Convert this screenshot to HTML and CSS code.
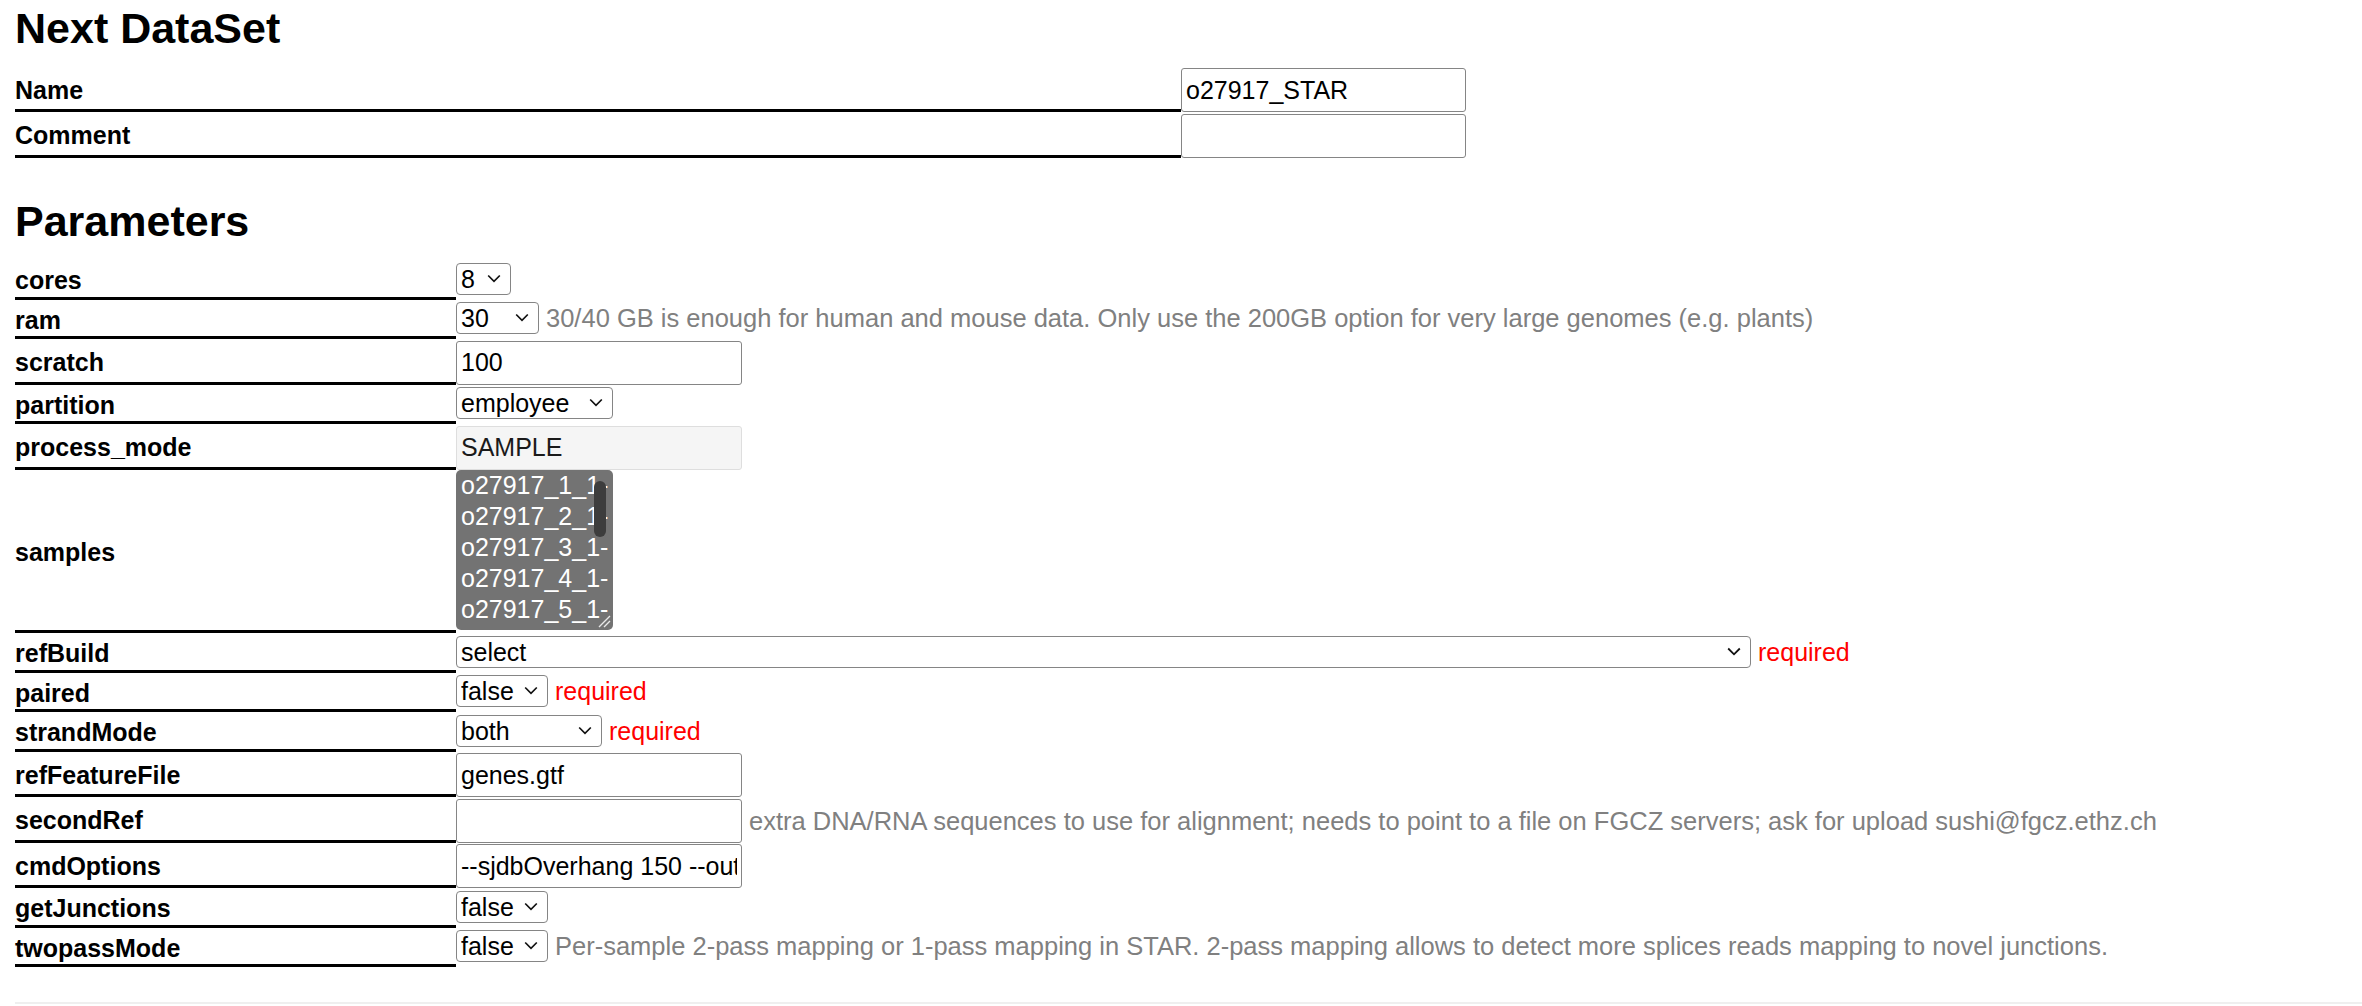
FILE: index.html
```html
<!DOCTYPE html>
<html lang="en">
<head>
<meta charset="utf-8">
<title>Next DataSet</title>
<link rel="stylesheet" href="styles.css">
</head>
<body>
<div class="page">
  <h2 class="title">Next DataSet</h2>
  <div class="grid grid-top">
    <div class="lab">Name</div>
    <div class="val v-inp"><input class="text w-name" type="text" value="o27917_STAR"></div>
    <div class="lab">Comment</div>
    <div class="val v-inp"><input class="text w-name" type="text" value=""></div>
  </div>

  <h2 class="title title-params">Parameters</h2>
  <div class="grid grid-params">
    <div class="lab">cores</div>
    <div class="val v-sel">
      <span class="sel w-cores"><select><option>8</option></select><svg class="chev" width="14" height="9" viewBox="0 0 14 9"><path d="M1.2 1.5 L7 7.3 L12.8 1.5" fill="none" stroke="#111" stroke-width="1.7"/></svg></span>
    </div>

    <div class="lab">ram</div>
    <div class="val v-sel">
      <span class="sel w-ram"><select><option>30</option></select><svg class="chev" width="14" height="9" viewBox="0 0 14 9"><path d="M1.2 1.5 L7 7.3 L12.8 1.5" fill="none" stroke="#111" stroke-width="1.7"/></svg></span>
      <span class="note note-sel">30/40 GB is enough for human and mouse data. Only use the 200GB option for very large genomes (e.g. plants)</span>
    </div>

    <div class="lab">scratch</div>
    <div class="val v-inp"><input class="text w-inp" type="text" value="100"></div>

    <div class="lab">partition</div>
    <div class="val v-sel">
      <span class="sel w-partition"><select><option>employee</option></select><svg class="chev" width="14" height="9" viewBox="0 0 14 9"><path d="M1.2 1.5 L7 7.3 L12.8 1.5" fill="none" stroke="#111" stroke-width="1.7"/></svg></span>
    </div>

    <div class="lab">process_mode</div>
    <div class="val v-inp"><input class="text w-inp ro" type="text" value="SAMPLE" readonly></div>

    <div class="lab">samples</div>
    <div class="val v-list">
      <div class="listbox">
        <div class="opt">o27917_1_1-</div>
        <div class="opt">o27917_2_1-</div>
        <div class="opt">o27917_3_1-</div>
        <div class="opt">o27917_4_1-</div>
        <div class="opt">o27917_5_1-</div>
        <div class="thumb"></div>
        <svg class="grip" width="14" height="14" viewBox="0 0 14 14"><path d="M2 13 L13 2 M7 13 L13 7" stroke="#e8e8e8" stroke-width="1.4" fill="none"/></svg>
      </div>
    </div>

    <div class="lab">refBuild</div>
    <div class="val v-sel">
      <span class="sel w-ref"><select><option>select</option></select><svg class="chev" width="14" height="9" viewBox="0 0 14 9"><path d="M1.2 1.5 L7 7.3 L12.8 1.5" fill="none" stroke="#111" stroke-width="1.8"/></svg></span>
      <span class="note note-sel req">required</span>
    </div>

    <div class="lab">paired</div>
    <div class="val v-sel">
      <span class="sel w-bool"><select><option>false</option></select><svg class="chev" width="14" height="9" viewBox="0 0 14 9"><path d="M1.2 1.5 L7 7.3 L12.8 1.5" fill="none" stroke="#111" stroke-width="1.7"/></svg></span>
      <span class="note note-sel req">required</span>
    </div>

    <div class="lab">strandMode</div>
    <div class="val v-sel">
      <span class="sel w-strand"><select><option>both</option></select><svg class="chev" width="14" height="9" viewBox="0 0 14 9"><path d="M1.2 1.5 L7 7.3 L12.8 1.5" fill="none" stroke="#111" stroke-width="1.7"/></svg></span>
      <span class="note note-sel req">required</span>
    </div>

    <div class="lab">refFeatureFile</div>
    <div class="val v-inp"><input class="text w-inp" type="text" value="genes.gtf"></div>

    <div class="lab">secondRef</div>
    <div class="val v-inp">
      <input class="text w-inp" type="text" value="">
      <span class="note note-inp">extra DNA/RNA sequences to use for alignment; needs to point to a file on FGCZ servers; ask for upload sushi@fgcz.ethz.ch</span>
    </div>

    <div class="lab">cmdOptions</div>
    <div class="val v-inp"><input class="text w-inp" type="text" value="--sjdbOverhang 150 --outFilterType BySJout --outSAMattributes All"></div>

    <div class="lab">getJunctions</div>
    <div class="val v-sel">
      <span class="sel w-bool"><select><option>false</option></select><svg class="chev" width="14" height="9" viewBox="0 0 14 9"><path d="M1.2 1.5 L7 7.3 L12.8 1.5" fill="none" stroke="#111" stroke-width="1.7"/></svg></span>
    </div>

    <div class="lab">twopassMode</div>
    <div class="val v-sel">
      <span class="sel w-bool"><select><option>false</option></select><svg class="chev" width="14" height="9" viewBox="0 0 14 9"><path d="M1.2 1.5 L7 7.3 L12.8 1.5" fill="none" stroke="#111" stroke-width="1.7"/></svg></span>
      <span class="note note-sel">Per-sample 2-pass mapping or 1-pass mapping in STAR. 2-pass mapping allows to detect more splices reads mapping to novel junctions.</span>
    </div>
  </div>
  <div class="footer-line"></div>
</div>
</body>
</html>
```

FILE: styles.css
```css
html, body {
  margin: 0;
  padding: 0;
  background: #fff;
}

body {
  font-family: "Liberation Sans", Arial, Helvetica, sans-serif;
  font-size: 25px;
  color: #000;
}

.page {
  padding: 4px 0 0 15px;
}

.title {
  margin: 0 0 16px 0;
  font-size: 43px;
  line-height: 48px;
  font-weight: bold;
}

.title-params {
  margin-top: 39px;
  margin-bottom: 17px;
}

.grid {
  display: grid;
  row-gap: 1.5px;
}

.grid-top {
  grid-template-columns: 1166px auto;
}

.grid-params {
  grid-template-columns: 441px auto;
}

.lab {
  display: flex;
  align-items: center;
  box-sizing: border-box;
  border-bottom: 3px solid #000;
  font-weight: bold;
  font-size: 25px;
  padding-top: 3px;
}

.val {
  display: flex;
  align-items: flex-start;
  white-space: nowrap;
}

.v-sel {
  height: 38px;
  box-sizing: border-box;
  padding-top: 1px;
}

.v-inp {
  height: 44px;
}

.v-list {
  height: 162px;
  box-sizing: border-box;
}

/* text inputs */
.text {
  box-sizing: border-box;
  height: 44px;
  margin: 0;
  border: 1px solid #858585;
  border-radius: 3px;
  padding: 0 4px;
  font-family: "Liberation Sans", Arial, Helvetica, sans-serif;
  font-size: 25px;
  color: #000;
  background: #fff;
  outline: none;
}

.w-name {
  width: 285px;
}

.w-inp {
  width: 286px;
}

.text.ro {
  background: #f5f5f5;
  border-color: #dedede;
  color: #1a1a1a;
}

/* selects */
.sel {
  position: relative;
  display: inline-block;
  height: 32px;
  flex: none;
}

.sel select {
  -webkit-appearance: none;
  appearance: none;
  box-sizing: border-box;
  width: 100%;
  height: 32px;
  margin: 0;
  border: 1px solid #858585;
  border-radius: 4px;
  padding: 0 0 0 4px;
  background: #fff;
  font-family: "Liberation Sans", Arial, Helvetica, sans-serif;
  font-size: 25px;
  color: #000;
  outline: none;
}

.chev {
  position: absolute;
  right: 10px;
  top: 11px;
  pointer-events: none;
}

.w-cores { width: 55px; }
.w-ram { width: 83px; }
.w-partition { width: 157px; }
.w-ref { width: 1295px; }
.w-bool { width: 92px; }
.w-strand { width: 146px; }

/* notes */
.note {
  margin-left: 7px;
  color: #808080;
  font-size: 25.5px;
}

.note-sel {
  line-height: 32px;
}

.note-inp {
  line-height: 44px;
}

.req {
  color: #ff0000;
  font-size: 25px;
}

/* multi select listbox */
.listbox {
  position: relative;
  box-sizing: border-box;
  width: 157px;
  height: 160px;
  margin-top: -1px;
  background: #737373;
  border-radius: 5px;
  padding: 0 0 0 5px;
  overflow: hidden;
  color: #fff;
}

.opt {
  height: 31px;
  line-height: 31px;
  white-space: nowrap;
  font-size: 25px;
}

.thumb {
  position: absolute;
  right: 7px;
  top: 11px;
  width: 12px;
  height: 56px;
  border-radius: 6px;
  background: #3d3d3d;
}

.grip {
  position: absolute;
  right: 2px;
  bottom: 2px;
}

.footer-line {
  margin-top: 35px;
  border-top: 2px solid #efefef;
}
```
